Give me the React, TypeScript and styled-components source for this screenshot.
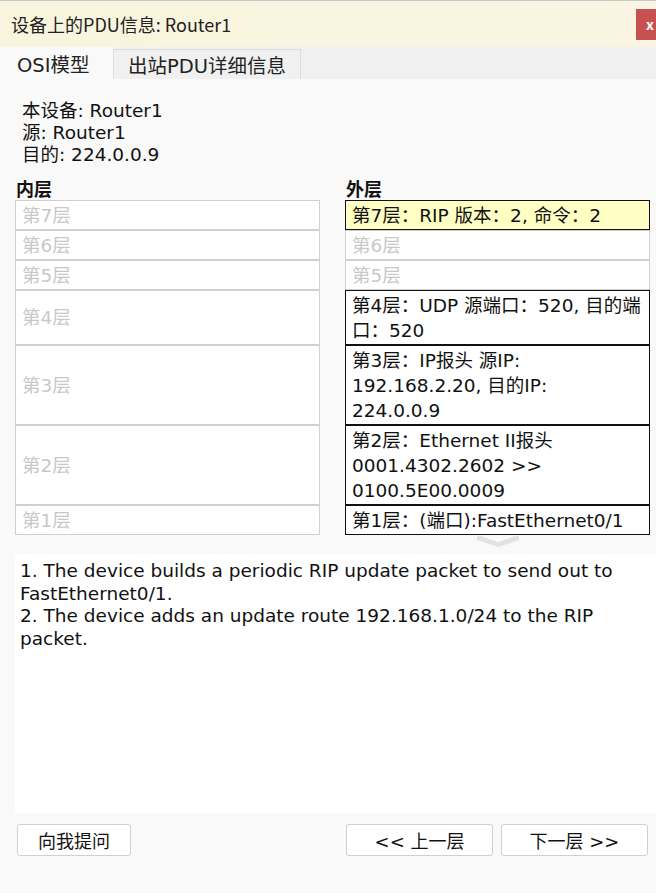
import React from "react";
import styled, { createGlobalStyle } from "styled-components";

const GlobalStyle = createGlobalStyle`
	html, body {
		margin: 0;
		padding: 0;
		background: #f9f9f9;
	}
	body {
		font-family: "DejaVu Sans", "Noto Sans CJK SC", sans-serif;
		color: #111;
	}
`;

const Window = styled.div`
	width: 656px;
	height: 893px;
	overflow: hidden;
	display: flex;
	flex-direction: column;
	background: #f9f9f9;
`;

const TitleBar = styled.div`
	height: 46px;
	border-top: 1px solid #c8c8c8;
	background: linear-gradient(90deg, #f9f4dd 0%, #faf5e2 100%);
	display: flex;
	align-items: center;
	justify-content: space-between;
	padding-left: 11px;
	font-family: "Noto Sans CJK SC", sans-serif;
	font-size: 18px;
	color: #222;
`;

const CloseButton = styled.div`
	width: 46px;
	height: 31px;
	margin-right: -26px;
	background: #c75050;
	color: #fff;
	font-size: 14px;
	font-weight: bold;
	display: flex;
	align-items: center;
	padding-left: 10px;
	box-sizing: border-box;
`;

const TabBar = styled.div`
	height: 32px;
	background: #f0f0f0;
	display: flex;
	align-items: flex-end;
`;

const Tab = styled.div<{ $active?: boolean }>`
	box-sizing: border-box;
	height: ${(p) => (p.$active ? "32px" : "30px")};
	width: ${(p) => (p.$active ? "113px" : "188px")};
	background: ${(p) => (p.$active ? "#f9f9f9" : "#f0f0f0")};
	border: ${(p) => (p.$active ? "none" : "1px solid #dcdcdc")};
	border-bottom: none;
	display: flex;
	align-items: center;
	justify-content: ${(p) => (p.$active ? "flex-start" : "center")};
	padding-left: ${(p) => (p.$active ? "17px" : "0")};
	font-size: 19.5px;
	color: #222;
`;

const Info = styled.div`
	margin-top: 21px;
	padding-left: 22px;
	font-size: 18.5px;
	line-height: 22px;
	color: #111;
`;

const LayerGrid = styled.div`
	margin-top: 10px;
	padding-left: 15px;
	display: grid;
	grid-template-columns: 305px 305px;
	column-gap: 25px;
`;

const ColumnHead = styled.div`
	font-family: "Noto Sans CJK SC", sans-serif;
	font-weight: bold;
	font-size: 18px;
	line-height: 24px;
	padding-left: 1px;
`;

const LayerBox = styled.div<{ $filled?: boolean; $highlight?: boolean }>`
	box-sizing: border-box;
	border: 1px solid ${(p) => (p.$filled ? "#111" : "#d0d0d0")};
	background: ${(p) => (p.$highlight ? "#ffffc4" : "#fff")};
	color: ${(p) => (p.$filled ? "#111" : "#c8c8c8")};
	padding: 1.5px 6px;
	font-size: 18.5px;
	line-height: 25px;
	white-space: nowrap;
	display: flex;
	align-items: center;
`;

const Pointer = styled.div`
	grid-column: 2;
	display: flex;
	justify-content: center;
	height: 12px;
	margin-top: 1px;
`;

const Description = styled.div`
	margin: 6px 0 0 15px;
	height: 259px;
	box-sizing: border-box;
	background: #fff;
	padding: 6px 5px;
	font-size: 18.5px;
	line-height: 22.5px;
	color: #111;
`;

const ButtonRow = styled.div`
	margin-top: 11px;
	padding: 0 8px 0 17px;
	display: flex;
	gap: 8px;
`;

const Button = styled.button<{ $wide?: boolean }>`
	height: 32px;
	width: ${(p) => (p.$wide ? "147px" : "114px")};
	background: #fff;
	border: 1px solid #cfcfcf;
	border-radius: 3px;
	font-family: "DejaVu Sans", "Noto Sans CJK SC", sans-serif;
	font-size: 18px;
	color: #111;
	padding: 0;
	&:first-child {
		margin-right: auto;
	}
`;

type Layer = { n: number; out?: string[] };

const layers: Layer[] = [
	{ n: 7, out: ["第7层：RIP 版本：2, 命令：2"] },
	{ n: 6 },
	{ n: 5 },
	{ n: 4, out: ["第4层：UDP 源端口：520, 目的端", "口：520"] },
	{ n: 3, out: ["第3层：IP报头 源IP:", "192.168.2.20, 目的IP:", "224.0.0.9"] },
	{ n: 2, out: ["第2层：Ethernet II报头", "0001.4302.2602 >>", "0100.5E00.0009"] },
	{ n: 1, out: ["第1层：(端口):FastEthernet0/1"] },
];

const App = () => {
	return (
		<>
			<GlobalStyle />
			<Window>
				<TitleBar>
					<span>设备上的PDU信息: Router1</span>
					<CloseButton>x</CloseButton>
				</TitleBar>
				<TabBar>
					<Tab $active>OSI模型</Tab>
					<Tab>出站PDU详细信息</Tab>
				</TabBar>
				<Info>
					<div>本设备: Router1</div>
					<div>源: Router1</div>
					<div>目的: 224.0.0.9</div>
				</Info>
				<LayerGrid>
					<ColumnHead>内层</ColumnHead>
					<ColumnHead>外层</ColumnHead>
					{layers.map((l) => (
						<React.Fragment key={l.n}>
							<LayerBox>第{l.n}层</LayerBox>
							{l.out ? (
								<LayerBox $filled $highlight={l.n === 7}>
									<div>
										{l.out.map((line, i) => (
											<div key={i}>{line}</div>
										))}
									</div>
								</LayerBox>
							) : (
								<LayerBox>第{l.n}层</LayerBox>
							)}
						</React.Fragment>
					))}
					<Pointer>
						<svg width="42" height="12" viewBox="0 0 42 12">
							<path d="M0 0 H42 V4 L21 11 L0 4 Z" fill="#e2e2e2" />
							<path d="M4 0 H38 L21 6 Z" fill="#fafafa" />
						</svg>
					</Pointer>
				</LayerGrid>
				<Description>
					<div>1. The device builds a periodic RIP update packet to send out to FastEthernet0/1.</div>
					<div>2. The device adds an update route 192.168.1.0/24 to the RIP packet.</div>
				</Description>
				<ButtonRow>
					<Button>向我提问</Button>
					<Button $wide>&lt;&lt; 上一层</Button>
					<Button $wide>下一层 &gt;&gt;</Button>
				</ButtonRow>
			</Window>
		</>
	);
};

export default App;
